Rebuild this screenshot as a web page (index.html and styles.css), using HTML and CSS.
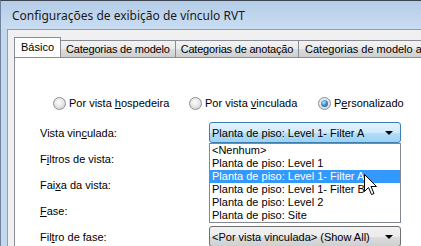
FILE: index.html
```html
<!DOCTYPE html>
<html>
<head>
<meta charset="utf-8">
<link rel="stylesheet" href="styles.css">
</head>
<body>
<div class="window">
  <div class="titlebar"><span class="title">Configurações de exibição de vínculo RVT</span></div>
  <div class="frame">
    <div class="client">
      <div class="tabs">
        <div class="tab active">Básico</div>
        <div class="tab">Categorias de modelo</div>
        <div class="tab">Categorias de anotação</div>
        <div class="tab last">Categorias de modelo analítico</div>
      </div>
      <div class="panel">
        <div class="radios">
          <div class="opt"><span class="radio"></span><span>Por vista <u>h</u>ospedeira</span></div>
          <div class="opt"><span class="radio"></span><span>Por vista <u>v</u>inculada</span></div>
          <div class="opt"><span class="radio checked"></span><span>P<u>e</u>rsonalizado</span></div>
        </div>
        <div class="form">
          <div class="lbl">Vista vin<u>c</u>ulada:</div>
          <div class="combo focused">
            <span class="value">Planta de piso: Level 1- Filter A</span>
            <span class="arrow"></span>
            <ul class="list">
              <li>&lt;Nenhum&gt;</li>
              <li>Planta de piso: Level 1</li>
              <li class="sel">Planta de piso: Level 1- Filter A</li>
              <li>Planta de piso: Level 1- Filter B</li>
              <li>Planta de piso: Level 2</li>
              <li>Planta de piso: Site</li>
              <svg class="cursor" width="14" height="22" viewBox="0 0 14 22"><path d="M0.5 0.5 L0.5 17.5 L4.5 13.5 L7.5 20.5 L10 19.5 L7 12.5 L12.5 12.5 Z" fill="#fff" stroke="#000" stroke-width="1" stroke-linejoin="miter"/></svg>
            </ul>
          </div>
          <div class="lbl">F<u>i</u>ltros de vista:</div>
          <div></div>
          <div class="lbl">Fai<u>x</u>a da vista:</div>
          <div></div>
          <div class="lbl"><u>F</u>ase:</div>
          <div></div>
          <div class="lbl">Fil<u>t</u>ro de fase:</div>
          <div class="combo">
            <span class="value">&lt;Por vista vinculada&gt; (Show All)</span>
            <span class="arrow"></span>
          </div>
        </div>
      </div>
    </div>
  </div>
</div>
</body>
</html>
```

FILE: styles.css
```css
html, body {
  margin: 0;
  padding: 0;
}
body {
  width: 421px;
  height: 246px;
  overflow: hidden;
  font-family: "Liberation Sans", Arial, sans-serif;
  font-size: 11px;
  color: #000;
  background: #c3d7ed;
}
.window {
  width: 421px;
  height: 246px;
  display: flex;
  flex-direction: column;
  border-top: 1px solid #3c4450;
  border-left: 1px solid #6f849c;
  box-sizing: border-box;
  overflow: hidden;
}
.titlebar {
  height: 28px;
  flex: none;
  background: linear-gradient(#b4cce7, #c2d7ee 60%, #c9dcf1);
  display: flex;
  align-items: center;
  padding-left: 11px;
}
.title {
  font-family: "Noto Sans", "Open Sans", sans-serif;
  font-size: 12px;
  color: #1a1a1a;
  white-space: nowrap;
  padding-top: 1px;
}
.frame {
  flex: 1;
  padding-left: 6px;
  background: #c3d7ed;
  display: flex;
  min-width: 0;
}
.client {
  flex: 1;
  min-width: 0;
  background: #f0f0f0;
  border-left: 1px solid #8aa0b9;
  border-top: 1px solid #8aa0b9;
  display: flex;
  flex-direction: column;
  padding-left: 6px;
}
.tabs {
  display: flex;
  align-items: flex-end;
  padding-top: 7px;
  white-space: nowrap;
  overflow: hidden;
}
.tab {
  flex: none;
  height: 16px;
  line-height: 16px;
  padding: 0 5px;
  letter-spacing: -0.2px;
  border: 1px solid #898c95;
  border-bottom: none;
  background: linear-gradient(#f2f2f2, #ebebeb 50%, #dddddd 51%, #cfcfcf);
  margin-left: -1px;
}
.tab:first-child {
  margin-left: 0;
}
.tab.last {
  letter-spacing: 0;
  padding-left: 6px;
}
.tab.active {
  height: 20px;
  line-height: 19px;
  background: #fff;
  position: relative;
  z-index: 1;
  margin-bottom: -1px;
  padding: 0 6px;
  letter-spacing: 0;
}
.panel {
  flex: 1;
  background: #fff;
  border-left: 1px solid #898c95;
  border-top: 1px solid #898c95;
}
.radios {
  display: grid;
  grid-template-columns: 136px 129px auto;
  margin: 39px 0 0 38px;
  height: 13px;
}
.opt {
  display: flex;
  align-items: center;
  gap: 3px;
  white-space: nowrap;
  line-height: 13px;
}
.radio {
  width: 11px;
  height: 11px;
  border-radius: 50%;
  border: 1px solid #8e8f8f;
  background: radial-gradient(circle at 45% 40%, #fdfdfd 0%, #e8e8e8 45%, #c9c9c9 100%);
  position: relative;
  flex: none;
}
.radio.checked::after {
  content: "";
  position: absolute;
  left: 2px;
  top: 2px;
  width: 7px;
  height: 7px;
  border-radius: 50%;
  background: radial-gradient(circle at 40% 35%, #c2e6ff 0%, #3d8fd6 45%, #1b4f8a 100%);
}
.form {
  display: grid;
  grid-template-columns: 169px 192px;
  grid-auto-rows: 21px;
  row-gap: 5px;
  margin: 12px 0 0 25px;
}
.lbl {
  display: flex;
  align-items: center;
  white-space: nowrap;
}
u {
  text-decoration: underline;
  text-underline-offset: 1px;
}
.combo {
  position: relative;
  box-sizing: border-box;
  border: 1px solid #707070;
  border-radius: 3px;
  background: linear-gradient(#f2f2f2, #ebebeb 50%, #dddddd 51%, #cfcfcf);
  display: flex;
  align-items: center;
  padding-left: 2px;
  white-space: nowrap;
}
.combo.focused {
  border-color: #3c7fb1;
  background: linear-gradient(#e3f3fd, #cfeafc 50%, #b3dffb 51%, #9dd2f3);
}
.arrow {
  position: absolute;
  right: 7px;
  top: 8px;
  width: 0;
  height: 0;
  border-left: 4px solid transparent;
  border-right: 4px solid transparent;
  border-top: 4px solid #000;
}
.list {
  position: absolute;
  left: -1px;
  top: 20px;
  width: 192px;
  box-sizing: border-box;
  margin: 0;
  padding: 0;
  list-style: none;
  background: #fff;
  border: 1px solid #828790;
  z-index: 2;
}
.list li {
  height: 13px;
  line-height: 13px;
  padding-left: 2px;
}
.list li.sel {
  background: #3399ff;
  color: #fff;
}
.cursor {
  position: absolute;
  left: 154px;
  top: 30px;
}
```
